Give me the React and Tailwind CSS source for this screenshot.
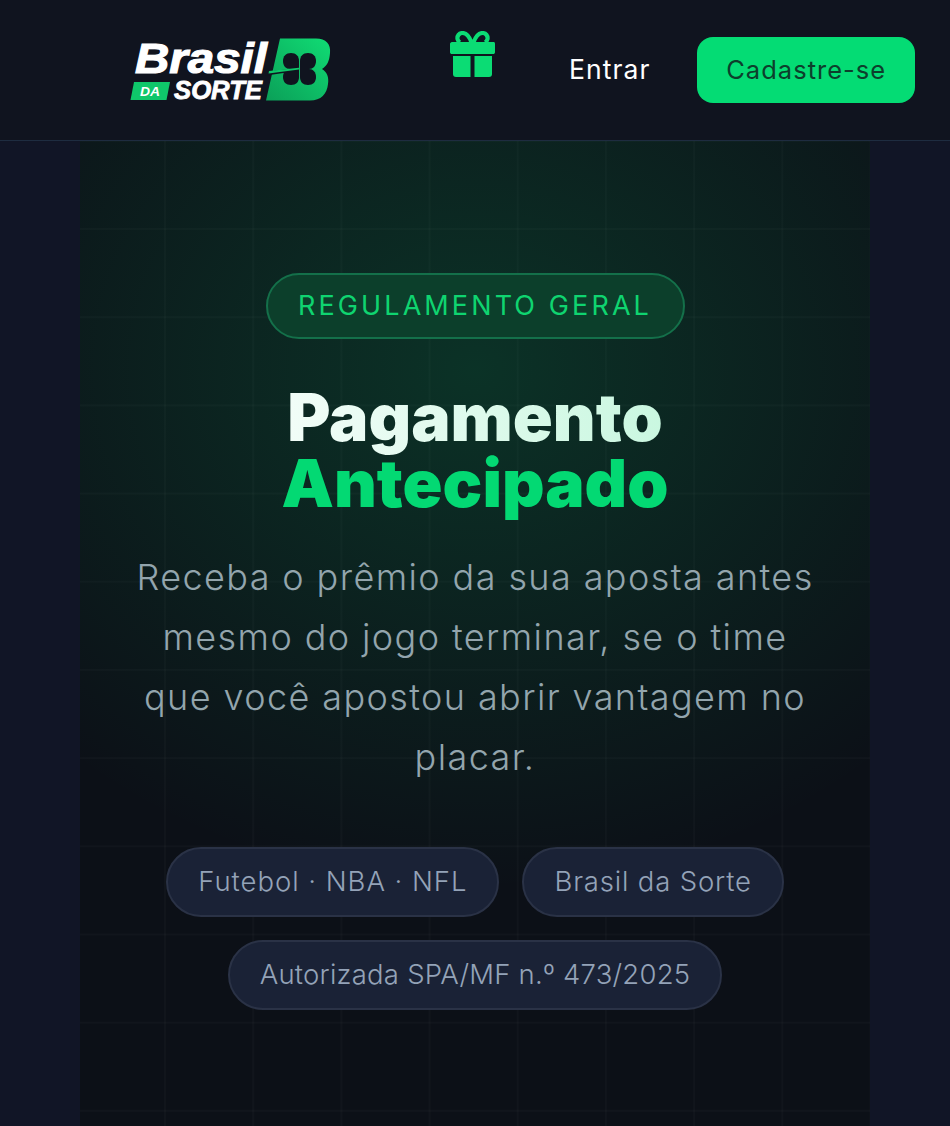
function Logo() {
  const leaf = "M169 31H160C156 31 153 28 153 23C153 18 156 15 161 15C166 15 169 18 169 23Z";
  return (
    <svg width="200" height="64" viewBox="0 0 200 64" className="block shrink-0 overflow-visible">
      <defs>
        <linearGradient id="bg" x1="0" y1="1" x2="1" y2="0">
          <stop offset="0" stopColor="#0b9f58" />
          <stop offset="1" stopColor="#10dc74" />
        </linearGradient>
      </defs>
      <path d="M150 0.500H186C196 0.500 201 6 200 15C199.500 23 197 28 192 31C197 34 199 39 198 46C197 56 191 62.500 180 62.500H136Z" fill="url(#bg)" />
      <g fill="#10141f">
        <path d={leaf} />
        <path d={leaf} transform="matrix(-1 0 0 1 339 0)" />
        <path d={leaf} transform="matrix(1 0 0 -1 0 62)" />
        <path d={leaf} transform="matrix(-1 0 0 -1 339 62)" />
        <path d="M127 35L167 30L167 33L126 39Z" />
      </g>
      <path d="M139 33L169 29.700L169 31.500L138.500 35.500Z" fill="#0fc76a" />
      <text x="5" y="35" textLength="132" lengthAdjust="spacingAndGlyphs" fontFamily="'Liberation Sans', sans-serif" fontSize="43" fontWeight="700" fontStyle="italic" fill="#fff" stroke="#fff" strokeWidth="1.200">Brasil</text>
      <path d="M4 44H40L36.500 62H0.500Z" fill="#0fc76a" />
      <text x="10" y="58" textLength="20" lengthAdjust="spacingAndGlyphs" fontFamily="'Liberation Sans', sans-serif" fontSize="13" fontWeight="700" fontStyle="italic" fill="#fff">DA</text>
      <text x="44" y="61" textLength="88" lengthAdjust="spacingAndGlyphs" fontFamily="'Liberation Sans', sans-serif" fontSize="25" fontWeight="700" fontStyle="italic" fill="#fff" stroke="#fff" strokeWidth="0.800">SORTE</text>
    </svg>
  );
}

function Gift() {
  return (
    <svg width="45" height="46" viewBox="0 0 45 46" className="block shrink-0">
      <path d="M21.500 11.500C19.500 6 16.500 2 12.500 2C9 2 7 5 7.500 8C8 10 9 11 10 11.500M23.500 11.500C25.500 6 28.500 2 32.500 2C36 2 38 5 37.500 8C37 10 36 11 35 11.500" fill="none" stroke="#0bdc74" strokeWidth="4.200" />
      <path d="M2 11H44C44.600 11 45 12 45 13V21C45 22.400 44.200 23 43 23H2C0.800 23 0 22.400 0 21V13C0 12 0.800 11 2 11Z" fill="#0bdc74" />
      <path d="M3 25H20.500V46H6C4 46 3 45 3 43Z" fill="#0bdc74" />
      <path d="M24.500 25H42V43C42 45 41 46 39 46H24.500Z" fill="#0bdc74" />
    </svg>
  );
}

const chip = "inline-flex h-[70px] items-center rounded-full border-2 border-[#2a3246] bg-[#1a2236] px-[30px] text-[27.500px] font-light text-[#94a3b8]";

export default function App() {
  return (
    <div className="flex min-h-[1126px] flex-col bg-[#111526] font-['Inter','Noto_Sans',sans-serif]">
      <header className="flex h-[141px] shrink-0 items-center border-b border-[#1e2c40] bg-[#10141f] pr-[35px] pl-[130px]">
        <Logo />
        <div className="mb-[32px] ml-[120px]">
          <Gift />
        </div>
        <a className="ml-[74px] text-[26.500px] font-normal tracking-[0.04em] text-white">Entrar</a>
        <button className="ml-[47px] h-[66px] w-[218px] rounded-[16px] bg-[#04dc74] text-[25.500px] font-normal tracking-[0.04em] text-[#0d3f2c]">Cadastre-se</button>
      </header>
      <main className="mx-[80px] flex h-[985px] flex-col items-center bg-[#0c1017] bg-[radial-gradient(ellipse_610px_520px_at_50%_229px,rgba(6,220,116,0.17)_0%,rgba(6,220,116,0)_100%),linear-gradient(to_right,rgba(255,255,255,0.018)_2px,transparent_2px),linear-gradient(to_bottom,rgba(255,255,255,0.018)_2px,transparent_2px)] bg-[length:100%_100%,88.2px_88.2px,88.2px_88.2px] bg-[position:0_0,84px_87px,84px_87px] pt-[132px]">
        <div className="flex h-[66px] w-[419px] items-center justify-center rounded-full border-2 border-[#14704a] bg-[#0c3f2b] text-[27px] font-normal tracking-[0.115em] text-[#0fd470]">REGULAMENTO GERAL</div>
        <h1 className="mt-[45px] text-center text-[66px] leading-[66px] font-black text-[#03d973]">
          <span className="-mb-[12px] block bg-gradient-to-r from-[#f2fdf8] to-[#c9f7e0] bg-clip-text pb-[12px] text-transparent">Pagamento</span>
          Antecipado
        </h1>
        <p className="mt-[31px] w-[690px] text-center text-[36px] leading-[60px] font-light tracking-[0.039em] text-[#93a5ad]">
          Receba o prêmio da sua aposta antes mesmo do jogo terminar, se o time que você apostou abrir vantagem no placar.
        </p>
        <div className="mt-[60px] flex w-[640px] flex-wrap justify-center gap-[23px]">
          <span className={`${chip} tracking-[0.035em]`}>Futebol · NBA · NFL</span>
          <span className={`${chip} tracking-[0.03em]`}>Brasil da Sorte</span>
          <span className={`${chip} tracking-[0.008em]`}>Autorizada SPA/MF n.º 473/2025</span>
        </div>
      </main>
    </div>
  );
}
